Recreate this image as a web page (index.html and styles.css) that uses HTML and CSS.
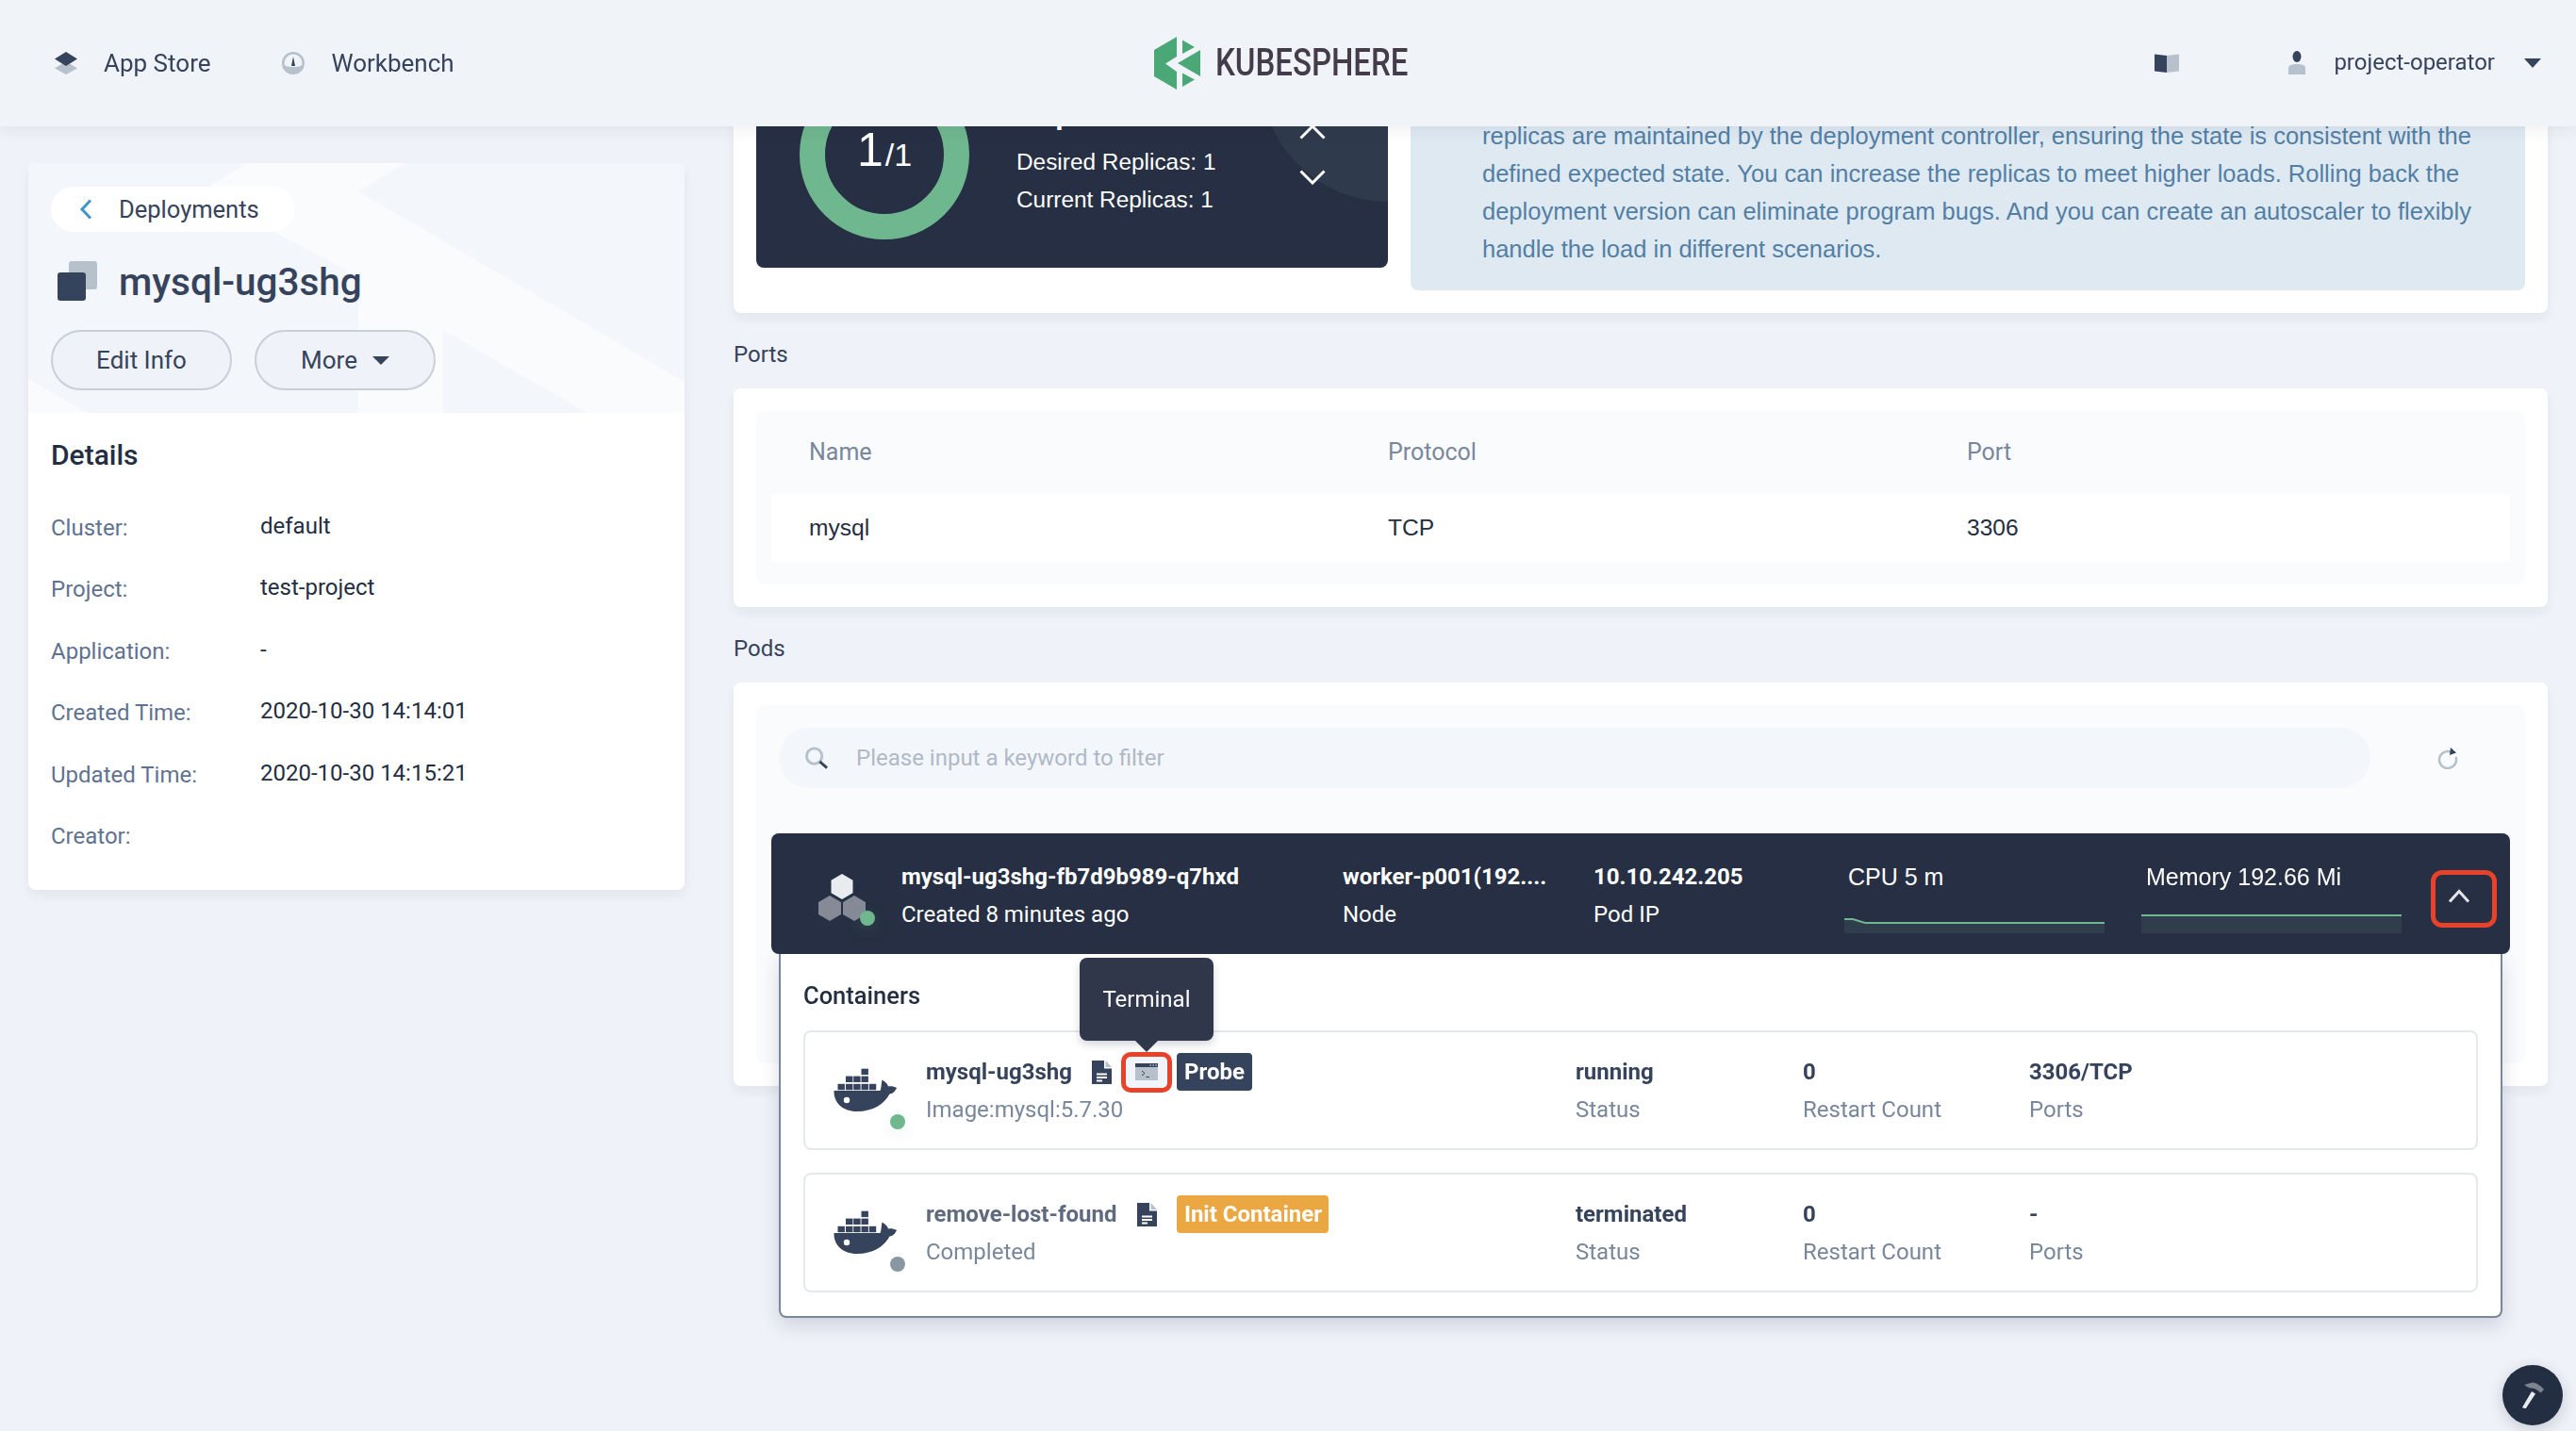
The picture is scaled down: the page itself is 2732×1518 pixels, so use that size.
FILE: index.html
```html
<!DOCTYPE html>
<html lang="en">
<head>
<meta charset="utf-8">
<title>mysql-ug3shg</title>
<link rel="stylesheet" href="styles.css">
</head>
<body>
<svg class="defs" width="0" height="0" aria-hidden="true">
  <symbol id="docker" viewBox="0 0 67 46">
    <g fill="#36435c">
      <rect x="29.5" y="0.7" width="7.4" height="6.4"/>
      <rect x="13" y="8.6" width="7.4" height="6.4"/><rect x="21.2" y="8.6" width="7.4" height="6.4"/><rect x="29.5" y="8.6" width="7.4" height="6.4"/>
      <rect x="4.5" y="16.8" width="7.4" height="6.4"/><rect x="13" y="16.8" width="7.4" height="6.4"/><rect x="21.2" y="16.8" width="7.4" height="6.4"/><rect x="29.5" y="16.8" width="7.4" height="6.4"/><rect x="37.8" y="16.8" width="7.4" height="6.4"/>
      <path d="M0.5 24H49.5C51 20 50.6 16 51.5 12.5C54.5 14 57.5 17 58 19.5C61 19 64 19.5 67 21C65 25.5 62.5 27 59.5 27.5C54 38 42 46 25 46C9 46 0 36 0.5 24Z"/>
    </g>
    <circle cx="14" cy="34" r="3.2" fill="#fff"/>
  </symbol>
  <symbol id="doc" viewBox="0 0 21 25">
    <path d="M0 0H13V8.500H21V25H0Z" fill="#36435c"/>
    <path d="M14.500 0L21 7H14.500Z" fill="#b6c1cc"/>
    <path d="M5 13.500H16V15.500H5ZM5 17H16V19H5ZM5 20.500H11V22.500H5Z" fill="#fff"/>
  </symbol>
</svg>

<header class="topbar">
  <nav class="nav-left">
    <a class="nav-item">
      <svg class="nav-icon" viewBox="0 0 24 24"><path d="M12 10L24 17.500L12 24L0 17.500Z" fill="#b6c1cc"/><path d="M12 0L24 7.500L12 15L0 7.500Z" fill="#36435c"/></svg>
      <span>App Store</span>
    </a>
    <a class="nav-item">
      <svg class="nav-icon" viewBox="0 0 24 24"><circle cx="12" cy="12" r="12" fill="#b6c1cc"/><path d="M2.500 12A9.500 9.500 0 0 1 21.500 12C21.500 15 19 16 12 16C5 16 2.500 15 2.500 12Z" fill="#f0f3f8"/><path d="M12 5L14 15H10Z" fill="#36435c"/></svg>
      <span>Workbench</span>
    </a>
  </nav>
  <div class="logo">
    <svg class="logo-mark" viewBox="0 0 49 56"><g fill="#4aa876"><path d="M24 0L0 14V42L24 56V37L12 28.500L24 21Z"/><path d="M30 3.500L43 11L30 18ZM49 14V42L25 28ZM30 38.500L43 45.500L30 53Z"/></g></svg>
    <span class="logo-text">KUBESPHERE</span>
  </div>
  <div class="nav-right">
    <svg class="book" viewBox="0 0 26 20"><path d="M13 2V20L0 18.500V0.500Z" fill="#36435c"/><path d="M13 2L26 0.500V18.500L13 20Z" fill="#b6c1cc"/></svg>
    <svg class="person" viewBox="0 0 18 25"><ellipse cx="9" cy="6" rx="4.500" ry="6" fill="#36435c"/><path d="M0 25V18C0 15 4 14 9 14C14 14 18 15 18 18V25Z" fill="#b6c1cc"/></svg>
    <span class="user">project-operator</span>
    <span class="caret caret-lg"></span>
  </div>
</header>

<main class="page">
  <aside class="side card">
    <div class="hero">
      <svg class="hero-art" viewBox="0 0 696 265" preserveAspectRatio="none"><path d="M232 0H400L350 30L696 232V265H593L440 177V265H350V120L261 73L193 24Z" fill="#fafbfd"/><path d="M0 229L62 265H0Z" fill="#fafbfd"/></svg>
      <a class="back"><svg class="back-icon" viewBox="0 0 14 22"><path d="M12 1.500L3 11L12 20.500" fill="none" stroke="#3f97c9" stroke-width="3"/></svg><span>Deployments</span></a>
      <div class="title-row">
        <span class="title-icon"><i class="sq sq-back"></i><i class="sq sq-front"></i></span>
        <h1 class="title">mysql-ug3shg</h1>
      </div>
      <div class="btns">
        <button class="btn">Edit Info</button>
        <button class="btn">More<span class="caret caret-sm"></span></button>
      </div>
    </div>
    <div class="details">
      <h2 class="details-title">Details</h2>
      <div class="detail"><span class="dk">Cluster:</span><span class="dv">default</span></div>
      <div class="detail"><span class="dk">Project:</span><span class="dv">test-project</span></div>
      <div class="detail"><span class="dk">Application:</span><span class="dv">-</span></div>
      <div class="detail"><span class="dk">Created Time:</span><span class="dv">2020-10-30 14:14:01</span></div>
      <div class="detail"><span class="dk">Updated Time:</span><span class="dv">2020-10-30 14:15:21</span></div>
      <div class="detail"><span class="dk">Creator:</span><span class="dv"></span></div>
    </div>
  </aside>

  <div class="content">
    <section class="card status-card">
      <div class="replica">
        <span class="replica-glow"></span>
        <div class="ring"><span class="ring-num">1</span><span class="ring-den">/1</span></div>
        <div class="replica-text">
          <div class="replica-title">Replicas</div>
          <div class="replica-line">Desired Replicas: 1</div>
          <div class="replica-line">Current Replicas: 1</div>
        </div>
        <div class="stepper">
          <svg class="step" viewBox="0 0 28 16"><path d="M1.500 14.500L14 2L26.500 14.500" fill="none" stroke="#fff" stroke-width="3"/></svg>
          <svg class="step" viewBox="0 0 28 16"><path d="M1.500 1.500L14 14L26.500 1.500" fill="none" stroke="#fff" stroke-width="3"/></svg>
        </div>
      </div>
      <div class="info">
        <p class="info-text">replicas are maintained by the deployment controller, ensuring the state is consistent with the<br>defined expected state. You can increase the replicas to meet higher loads. Rolling back the<br>deployment version can eliminate program bugs. And you can create an autoscaler to flexibly<br>handle the load in different scenarios.</p>
      </div>
    </section>

    <h3 class="section-label">Ports</h3>
    <section class="card pad">
      <div class="inner ports">
        <div class="ports-head"><span>Name</span><span>Protocol</span><span>Port</span></div>
        <div class="ports-row"><span>mysql</span><span>TCP</span><span>3306</span></div>
      </div>
    </section>

    <h3 class="section-label">Pods</h3>
    <section class="card pad">
      <div class="inner pods">
        <div class="toolbar">
          <div class="search">
            <svg class="search-icon" viewBox="0 0 26 24"><circle cx="10" cy="10" r="8.500" fill="none" stroke="#b6c1cc" stroke-width="3"/><path d="M16 16L24 23" stroke="#36435c" stroke-width="3"/></svg>
            <span class="placeholder">Please input a keyword to filter</span>
          </div>
          <svg class="refresh" viewBox="0 0 24 24"><path d="M15 5.500A9 9 0 1 0 20.500 11" fill="none" stroke="#b6c1cc" stroke-width="2.500"/><path d="M15 1L21 6.500L14 9Z" fill="#36435c"/></svg>
        </div>

        <div class="pod">
          <div class="pod-row">
            <div class="pod-icon">
              <svg class="hexes" viewBox="0 0 50 50"><path d="M25 0L36.500 6.700V20.300L25 27L13.500 20.300V6.700Z" fill="#e9ecef"/><path d="M12 23L24 30V43L12 50L0 43V30Z" fill="#858a96"/><path d="M38 23L50 30V43L38 50L26 43V30Z" fill="#858a96"/></svg>
              <i class="dot dot-green"></i>
            </div>
            <div class="pod-cell pod-name"><b>mysql-ug3shg-fb7d9b989-q7hxd</b><span>Created 8 minutes ago</span></div>
            <div class="pod-cell pod-node"><b>worker-p001(192....</b><span>Node</span></div>
            <div class="pod-cell pod-ip"><b>10.10.242.205</b><span>Pod IP</span></div>
            <div class="metric metric-cpu">
              <span>CPU 5 m</span>
              <svg class="spark" viewBox="0 0 276 16"><path d="M0 1H9L22 5H276V16H0Z" fill="#303d4c"/><path d="M0 1H9L22 5H276" fill="none" stroke="#6fb78f" stroke-width="2"/></svg>
            </div>
            <div class="metric metric-mem">
              <span>Memory 192.66 Mi</span>
              <svg class="spark spark-mem" viewBox="0 0 276 20"><path d="M0 1H276V20H0Z" fill="#303d4c"/><path d="M0 1H276" fill="none" stroke="#6fb78f" stroke-width="2"/></svg>
            </div>
            <button class="collapse"><svg class="collapse-icon" viewBox="0 0 24 15"><path d="M2 13.500L12 2.500L22 13.500" fill="none" stroke="#e3e5e8" stroke-width="3"/></svg></button>
          </div>

          <div class="expand">
            <div class="expand-title">Containers</div>
            <div class="container">
              <div class="c-icon"><svg class="whale"><use href="#docker"/></svg><i class="dot dot-green"></i></div>
              <div class="c-main">
                <div class="c-head">
                  <b class="c-name">mysql-ug3shg</b>
                  <svg class="doc doc-a"><use href="#doc"/></svg>
                  <span class="term">
                    <svg class="term-icon" viewBox="0 0 24 18"><rect width="24" height="18" fill="#b6c1cc"/><rect width="24" height="4" fill="#36435c"/><path d="M15.500 1H17M18.500 1H20M21.500 1H23" stroke="#fff" stroke-width="1" transform="translate(0 1)"/><path d="M7 8L10 10.500L7 13M11.500 14.500H15" fill="none" stroke="#36435c" stroke-width="1"/></svg>
                    <span class="tip">Terminal</span>
                  </span>
                  <span class="tag tag-dark">Probe</span>
                </div>
                <div class="c-sub">Image:mysql:5.7.30</div>
              </div>
              <div class="stat"><b>running</b><span>Status</span></div>
              <div class="stat"><b>0</b><span>Restart Count</span></div>
              <div class="stat"><b>3306/TCP</b><span>Ports</span></div>
            </div>
            <div class="container">
              <div class="c-icon"><svg class="whale"><use href="#docker"/></svg><i class="dot dot-gray"></i></div>
              <div class="c-main">
                <div class="c-head">
                  <b class="c-name c-name-muted">remove-lost-found</b>
                  <svg class="doc doc-b"><use href="#doc"/></svg>
                  <span class="tag tag-orange">Init Container</span>
                </div>
                <div class="c-sub">Completed</div>
              </div>
              <div class="stat"><b>terminated</b><span>Status</span></div>
              <div class="stat"><b>0</b><span>Restart Count</span></div>
              <div class="stat"><b>-</b><span>Ports</span></div>
            </div>
          </div>
        </div>
      </div>
    </section>
  </div>
</main>

<button class="fab">
  <svg class="fab-icon" viewBox="0 0 26 28"><path d="M2 27L12 10L16 12.500L5.500 28.500Z" fill="#e9ecef"/><path d="M4 3L13 0.500C17 1 22 4 25 8L21.500 11.500C18 8 14 6 10 6.500C8 5.500 6 4.500 4 3Z" fill="#7d8390"/></svg>
</button>
</body>
</html>
```

FILE: styles.css
```css
* { box-sizing: border-box; }
html, body { margin: 0; height: 1518px; overflow: hidden; }
body {
  background: #eff2f8;
  color: #36435c;
  font-family: Roboto, "Noto Sans", sans-serif;
  font-size: 24px;
  line-height: 32px;
}
h1, h2, h3, p { margin: 0; font-weight: 400; }
.defs { position: absolute; }

/* header */
.topbar {
  position: fixed; top: 0; left: 0; right: 0; z-index: 10;
  height: 134px;
  background: #f0f3f8;
  box-shadow: 0 4px 16px rgba(36, 46, 66, .07);
  display: grid;
  grid-template-columns: 1fr auto 1fr;
  align-items: center;
}
.nav-left { display: flex; padding-left: 58px; gap: 76px; font-size: 26px; }
.nav-item { display: flex; align-items: center; gap: 28px; }
.nav-icon { width: 24px; height: 24px; }
.logo { display: flex; align-items: center; width: 270px; margin-left: -15px; gap: 16px; }
.logo-mark { width: 49px; height: 56px; flex: none; }
.logo-text {
  font-size: 40px; line-height: 40px; font-weight: 500; color: #443c4b;
  transform: scaleX(.825); transform-origin: left center; white-space: nowrap;
}
.nav-right { display: flex; align-items: center; justify-content: flex-end; padding-right: 37px; }
.book { width: 26px; height: 20px; margin-right: 116px; }
.person { width: 18px; height: 25px; margin-right: 30px; margin-top: -2px; }
.user { margin-top: -3px; }
.caret { display: inline-block; width: 0; height: 0; border-style: solid; border-color: #36435c transparent transparent; }
.caret-lg { border-width: 10px 9.500px 0; margin-left: 31px; }
.caret-sm { border-width: 9px 9px 0; margin-left: 16px; }

/* layout */
.page { display: flex; align-items: flex-start; padding: 0 30px; gap: 52px; }
.card {
  background: #fff; border-radius: 8px;
  box-shadow: 0 6px 12px rgba(36, 46, 66, .06);
}
.side { flex: none; width: 696px; margin-top: 173px; overflow: hidden; }
.content { flex: 1; min-width: 0; }

/* left card */
.hero {
  position: relative; height: 265px; background: #f3f6fb;
  padding: 25px 0 0 24px;
}
.hero-art { position: absolute; inset: 0; width: 100%; height: 100%; }
.back {
  position: relative; display: flex; align-items: center;
  width: 259px; height: 48px; border-radius: 24px; background: #fff;
  padding-left: 30px; gap: 28px; font-size: 25.500px;
}
.back-icon { width: 14px; height: 22px; }
.title-row { position: relative; display: flex; align-items: center; height: 56px; margin-top: 24px; padding-left: 7px; gap: 23px; }
.title-icon { position: relative; width: 42px; height: 42px; flex: none; }
.sq { position: absolute; width: 30px; height: 30px; border-radius: 3px; }
.sq-back { right: 0; top: 0; background: #b6c1cc; }
.sq-front { left: 0; bottom: 0; background: #36435c; }
.title { font-size: 40.500px; line-height: 58px; font-weight: 500; color: #36435c; padding-top: 2px; }
.btns { position: relative; display: flex; gap: 24px; margin-top: 24px; }
.btn {
  display: flex; align-items: center; justify-content: center;
  width: 192px; height: 64px; border-radius: 32px;
  border: 2px solid #c8cfd7; background: #eff2f8;
  color: #36435c; font: inherit; font-size: 26px;
}
.details { padding: 24px 24px 24px; }
.details-title { font-size: 30px; line-height: 42px; color: #242e42; font-weight: 500; margin-bottom: 23px; }
.detail { display: grid; grid-template-columns: 222px 1fr; align-items: center; height: 65.500px; }
.dk { color: #5f7291; }
.dv { color: #242e42; padding-bottom: 4px; }

/* status */
.status-card { height: 332px; display: flex; padding: 0 24px; gap: 24px; border-radius: 0 0 8px 8px; }
.replica {
  position: relative; overflow: hidden;
  flex: none; width: 670px; height: 284px; background: #262f43;
  border-radius: 0 0 8px 8px; display: flex; color: #fff;
}
.replica-glow {
  position: absolute; left: 535px; top: -56px; width: 270px; height: 270px;
  border-radius: 50%; background: #303a4d;
}
.ring {
  position: absolute; left: 46px; top: 74px; width: 180px; height: 180px;
  border: 27px solid #6fb78f; border-radius: 50%;
  display: flex; align-items: baseline; justify-content: center;
  padding-top: 28px;
  font-family: "Liberation Sans", Arial, sans-serif;
}
.ring-num { font-size: 50px; line-height: 60px; }
.ring-den { font-size: 34px; line-height: 60px; margin-left: 2px; }
.replica-text { position: absolute; left: 276px; top: 118px; font-family: "Liberation Sans", Arial, sans-serif; font-size: 24.400px; }
.replica-title { font-size: 32px; line-height: 40px; font-weight: 700; margin-top: -18px; height: 52px; }
.replica-line { line-height: 40px; }
.stepper { position: absolute; left: 576px; top: 132px; display: flex; flex-direction: column; gap: 32px; }
.step { display: block; width: 28px; height: 16px; }
.info {
  flex: 1; height: 308px; background: #dee9f2; border-radius: 0 0 8px 8px;
  display: flex; flex-direction: column; justify-content: flex-end;
  padding: 0 40px 24px 76px;
}
.info-text { color: #537fa5; font-size: 25.500px; line-height: 40px; white-space: nowrap; font-family: "Liberation Sans", Arial, sans-serif; }

/* sections */
.section-label { margin: 28px 0 20px; line-height: 32px; font-size: 24px; font-weight: 400; color: #36435c; }
.pad { padding: 24px; }
.inner { background: #f9fbfd; border-radius: 8px; }
.ports { padding: 0 16px 24px; }
.ports-head, .ports-row { display: grid; grid-template-columns: repeat(3, 614px); padding-left: 40px; align-items: center; }
.ports-head { height: 88px; color: #79879c; font-size: 25px; }
.ports-row { height: 72px; background: #fff; color: #242e42; font-size: 24.600px; font-family: "Liberation Sans", Arial, sans-serif; }

/* pods */
.pods { height: 380px; padding: 24px 16px; }
.toolbar { display: flex; align-items: center; padding-left: 8px; }
.search {
  width: 1688px; height: 64px; border-radius: 32px; background: #f3f6fa;
  display: flex; align-items: center; padding-left: 28px; gap: 29px;
}
.search-icon { width: 25px; height: 24px; }
.placeholder { color: #b0b9c7; }
.refresh { width: 24px; height: 24px; margin-left: 70px; }
.pod { position: relative; margin-top: 48px; }
.pod-row {
  position: relative; z-index: 2;
  height: 128px; background: #262f43; border-radius: 8px;
  display: flex; color: #fff;
}
.pod-icon { position: relative; flex: none; width: 138px; }
.hexes { position: absolute; left: 50px; top: 43px; width: 50px; height: 50px; }
.dot { position: absolute; width: 16px; height: 16px; border-radius: 50%; }
.dot-green { background: #6fb78f; box-shadow: 0 4px 16px rgba(111, 183, 143, .18); }
.dot-gray { background: #8b96a3; }
.pod-icon .dot { left: 94px; top: 82px; }
.pod-cell { display: flex; flex-direction: column; padding-top: 26px; line-height: 40px; white-space: nowrap; }
.pod-cell b { font-weight: 700; }
.pod-name { width: 468px; }
.pod-node { width: 266px; }
.pod-ip { width: 266px; }
.metric { display: flex; flex-direction: column; padding-top: 26px; line-height: 40px; font-size: 25px; font-family: "Liberation Sans", Arial, sans-serif; }
.metric-cpu { width: 315px; padding-left: 4px; }
.metric-cpu .spark { margin: 24px 0 0 -4px; width: 276px; height: 16px; display: block; }
.metric-mem { width: 307px; padding-left: 5px; }
.spark-mem { margin: 20px 0 0 -5px; width: 276px; height: 20px; display: block; }
.collapse {
  position: absolute; left: 1760px; top: 39px;
  width: 70px; height: 61px; padding: 0; background: none;
  border: 5px solid #e8432a; border-radius: 12px;
}
.collapse-icon { display: block; width: 24px; height: 15px; margin: 0 0 6px 13px; }

.expand {
  position: absolute; z-index: 1; left: 8px; right: 8px; top: 128px; height: 386px;
  background: #fff; border: 2px solid #79879c; border-top: 0; border-radius: 0 0 8px 8px;
  box-shadow: 0 8px 20px rgba(36, 46, 66, .16);
  padding: 28px 24px 0;
}
.expand-title { line-height: 32px; color: #242e42; font-weight: 500; margin-bottom: 21px; font-size: 25.500px; }
.container {
  height: 127px; border: 2px solid #e3e9ef; border-radius: 8px; margin-bottom: 24px;
  display: grid; grid-template-columns: 128px 689px 241px 240px 1fr;
  padding-top: 22px; line-height: 40px;
}
.c-icon { position: relative; }
.whale { position: absolute; left: 30px; top: 16px; width: 67px; height: 46px; }
.c-icon .dot { left: 90px; top: 65px; }
.c-head { display: flex; align-items: center; height: 40px; }
.c-name { font-weight: 700; color: #36435c; white-space: nowrap; }
.c-name-muted { color: #5f6b7d; }
.c-sub { color: #79879c; }
.doc { width: 21px; height: 25px; flex: none; }
.doc-a { margin-left: 21px; margin-right: 10px; }
.doc-b { margin-left: 22px; margin-right: 21px; }
.term {
  position: relative; flex: none; display: flex; align-items: center; justify-content: center;
  width: 54px; height: 43px; border: 5px solid #e8432a; border-radius: 10px; background: #f1f4f9;
  margin: 0 5px 0 0;
}
.term-icon { width: 24px; height: 18px; flex: none; }
.tip {
  position: absolute; left: 50%; bottom: 50px; transform: translateX(-50%);
  width: 142px; height: 88px; border-radius: 8px; background: #30374b; color: #fff;
  display: flex; align-items: center; justify-content: center;
  box-shadow: 0 4px 8px rgba(36, 46, 66, .2);
}
.tip::after {
  content: ""; position: absolute; left: 50%; top: 100%; margin-left: -12px;
  border-style: solid; border-width: 12px 12px 0; border-color: #30374b transparent transparent;
}
.tag {
  flex: none; height: 40px; border-radius: 4px; color: #fff; font-weight: 700;
  display: flex; align-items: center; justify-content: center;
  white-space: nowrap;
}
.tag-dark { width: 80px; background: #36435c; }
.tag-orange { width: 161px; background: #eba742; }
.stat { display: flex; flex-direction: column; }
.stat b { font-weight: 700; color: #36435c; }
.stat span { color: #79879c; }

/* fab */
.fab {
  position: fixed; right: 14px; bottom: 6px; width: 64px; height: 64px; padding: 0;
  border: 0; border-radius: 50%; background: #242e42;
  box-shadow: 0 4px 16px rgba(36, 46, 66, .2);
  display: flex; align-items: center; justify-content: center;
}
.fab-icon { width: 26px; height: 28px; }
```
